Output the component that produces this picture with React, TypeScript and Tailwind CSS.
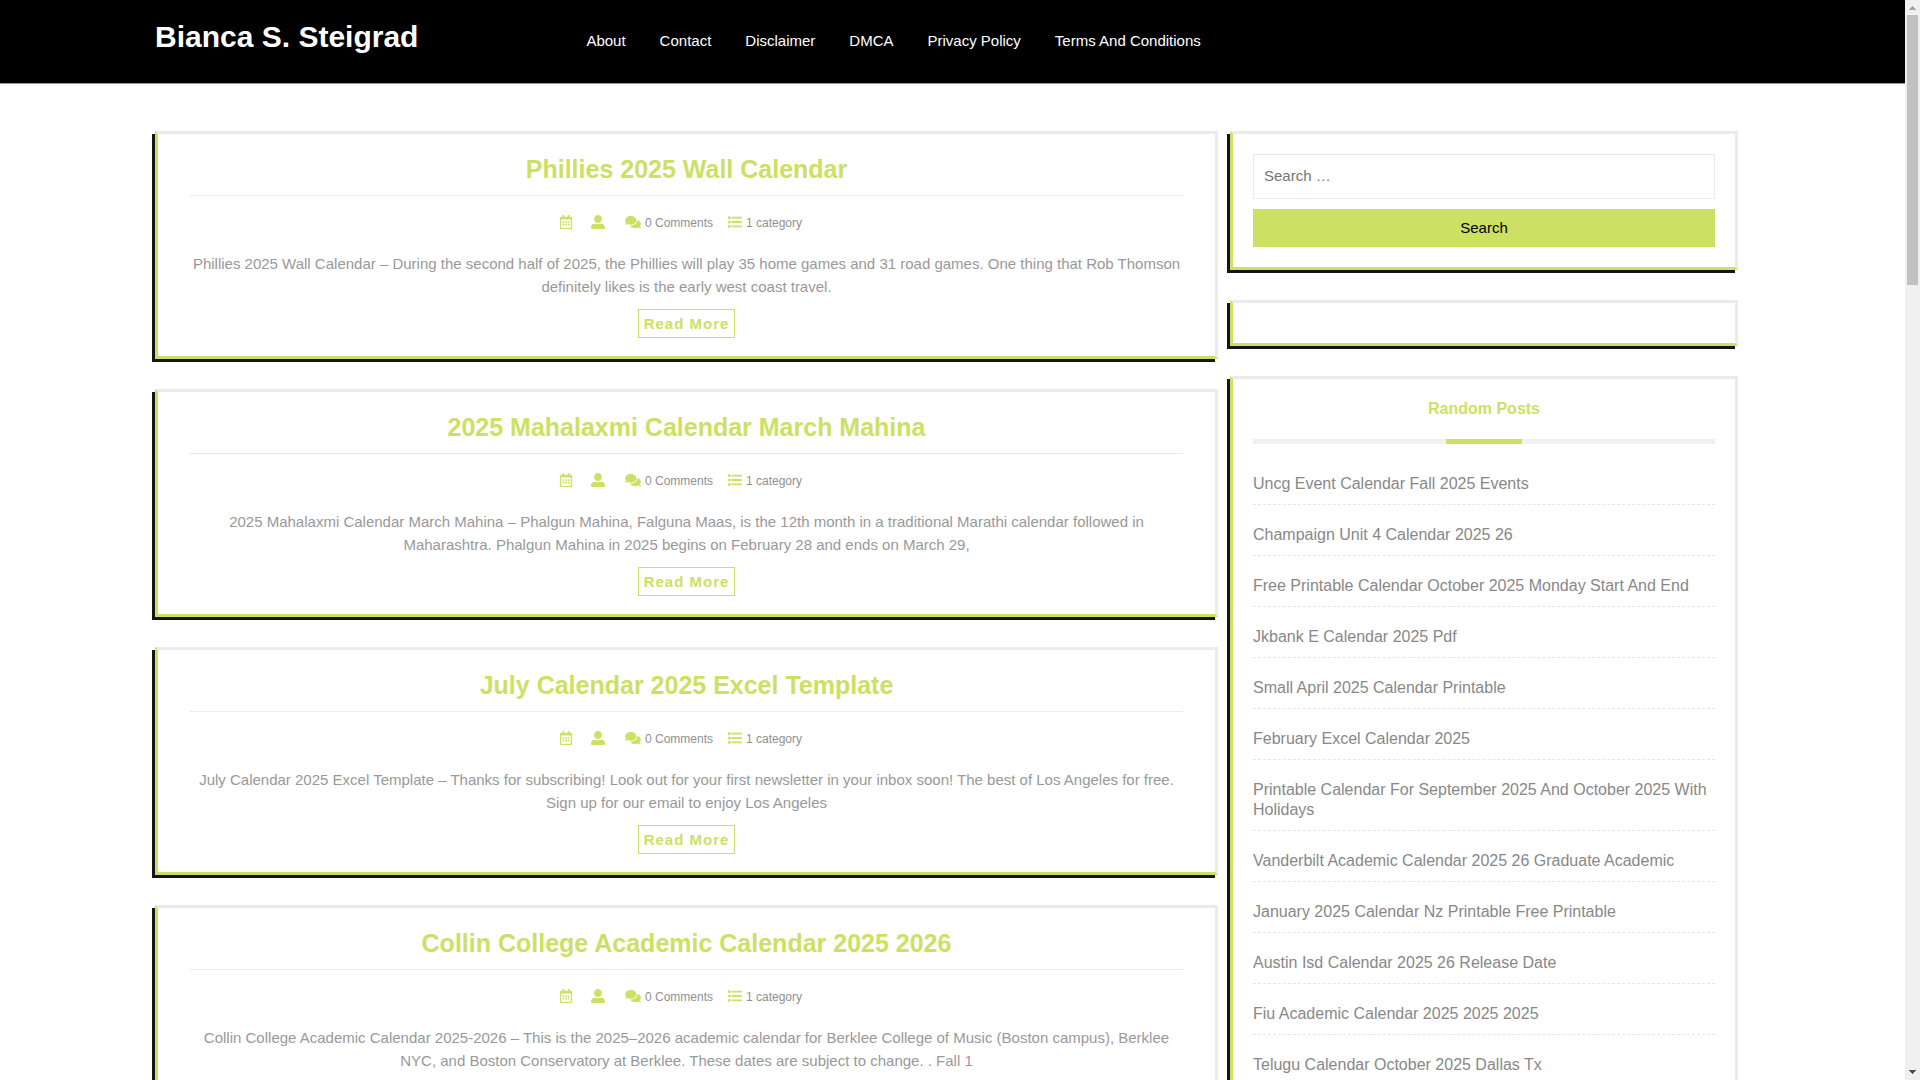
import React from "react";
import { FaRegCalendarAlt, FaUserAlt, FaComments } from "react-icons/fa";

const navItems = ["About", "Contact", "Disclaimer", "DMCA", "Privacy Policy", "Terms And Conditions"];

const posts = [
  {
    title: "Phillies 2025 Wall Calendar",
    text: "Phillies 2025 Wall Calendar – During the second half of 2025, the Phillies will play 35 home games and 31 road games. One thing that Rob Thomson definitely likes is the early west coast travel.",
  },
  {
    title: "2025 Mahalaxmi Calendar March Mahina",
    text: "2025 Mahalaxmi Calendar March Mahina – Phalgun Mahina, Falguna Maas, is the 12th month in a traditional Marathi calendar followed in Maharashtra. Phalgun Mahina in 2025 begins on February 28 and ends on March 29,",
  },
  {
    title: "July Calendar 2025 Excel Template",
    text: "July Calendar 2025 Excel Template – Thanks for subscribing! Look out for your first newsletter in your inbox soon! The best of Los Angeles for free. Sign up for our email to enjoy Los Angeles",
  },
  {
    title: "Collin College Academic Calendar 2025 2026",
    text: "Collin College Academic Calendar 2025-2026 – This is the 2025–2026 academic calendar for Berklee College of Music (Boston campus), Berklee NYC, and Boston Conservatory at Berklee. These dates are subject to change. . Fall 1",
  },
];

const randomPosts = [
  "Uncg Event Calendar Fall 2025 Events",
  "Champaign Unit 4 Calendar 2025 26",
  "Free Printable Calendar October 2025 Monday Start And End",
  "Jkbank E Calendar 2025 Pdf",
  "Small April 2025 Calendar Printable",
  "February Excel Calendar 2025",
  "Printable Calendar For September 2025 And October 2025 With Holidays",
  "Vanderbilt Academic Calendar 2025 26 Graduate Academic",
  "January 2025 Calendar Nz Printable Free Printable",
  "Austin Isd Calendar 2025 26 Release Date",
  "Fiu Academic Calendar 2025 2025 2025",
  "Telugu Calendar October 2025 Dallas Tx",
];

const frame =
  "border-3 border-t-[#ebebeb] border-r-[#ebebeb] border-b-[#cce164] border-l-[#cce164] shadow-[-3px_3px_0_0_#121616]";

function ListIcon() {
  return (
    <svg className="mb-0.5 size-3.5 text-[#cce164]" viewBox="0 0 512 512" fill="currentColor" aria-hidden="true">
      {[48, 208, 368].map((y) => (
        <g key={y}>
          <rect x="0" y={y} width="96" height="96" rx="16" />
          <rect x="128" y={y + 12} width="384" height="72" rx="16" />
        </g>
      ))}
    </svg>
  );
}

function PostCard({ title, text }: { title: string; text: string }) {
  return (
    <article className={`${frame} px-8 pt-4 pb-[18px] text-center`}>
      <h2 className="border-b border-[#ebebeb] pt-[5px] pb-3 text-[25px] leading-7 font-bold text-[#cce164]">
        <a href="#">{title}</a>
      </h2>
      <div className="mt-[17px] flex h-5 items-center justify-center pr-3 text-xs text-[#909090]">
        <FaRegCalendarAlt className="mr-[18px] mb-0.5 size-3.5 text-[#cce164]" />
        <FaUserAlt className="mr-5 mb-0.5 size-3.5 text-[#cce164]" />
        <a href="#" className="mr-[15px] flex items-center gap-1">
          <FaComments className="mb-0.5 h-3.5 w-4 text-[#cce164]" />
          0 Comments
        </a>
        <a href="#" className="flex items-center gap-1">
          <ListIcon />
          1 category
        </a>
      </div>
      <p className="mt-[19px] text-[15px] leading-[23px] text-[#999]">{text}</p>
      <a
        href="#"
        className="mt-[11px] inline-block border border-[#cce164] px-[5px] text-[15px] leading-[27px] font-bold tracking-[1px] text-[#cce164]"
      >
        Read More
      </a>
    </article>
  );
}

function Scrollbar() {
  return (
    <div className="flex w-[15px] shrink-0 flex-col items-center bg-[#f0f0f0]" aria-hidden="true">
      <svg width="15" height="15" viewBox="0 0 15 15" fill="#a3a3a3">
        <path d="M4 10h7v-1h-1v-1h-1v-1h-1v-1h-1v1h-1v1h-1v1h-1z" />
      </svg>
      <div className="h-1/4 w-[11px] bg-[#c1c1c1]" />
      <svg className="mt-auto" width="15" height="15" viewBox="0 0 15 15" fill="#505050">
        <path d="M4 5h7v1h-1v1h-1v1h-1v1h-1v-1h-1v-1h-1v-1h-1z" />
      </svg>
    </div>
  );
}

export default function App() {
  return (
    <div className="flex h-screen overflow-hidden bg-white font-['Liberation_Sans',Arial,sans-serif]">
      <div className="min-w-0 flex-1 overflow-hidden">
        <header className="flex items-start border-b border-[#999] bg-black pr-[167px] pb-[27px] pl-[155px] text-white">
          <h1 className="mr-1 w-[27%] pt-[19px] text-3xl leading-9 font-bold">
            <a href="#">Bianca S. Steigrad</a>
          </h1>
          <nav className="pt-[26px]">
            <ul className="flex gap-[34px] text-[15px] leading-[30px]">
              {navItems.map((item) => (
                <li key={item}>
                  <a href="#">{item}</a>
                </li>
              ))}
            </ul>
          </nav>
        </header>

        <main className="grid grid-cols-[1063fr_508fr] items-start gap-3 pt-[47px] pr-[167px] pl-[155px]">
          <section className="flex flex-col gap-[30px]">
            {posts.map((post) => (
              <PostCard key={post.title} {...post} />
            ))}
          </section>

          <aside className="flex flex-col gap-[30px]">
            <form className={`${frame} flex flex-col gap-2.5 p-5 text-[15px]`} onSubmit={(e) => e.preventDefault()}>
              <input
                type="search"
                aria-label="Search"
                placeholder="Search …"
                className="h-[45px] border border-[#ebebeb] px-2.5 pb-0.5 placeholder:text-[#757575]"
              />
              <button type="submit" className="h-[38px] bg-[#cce164] text-black">
                Search
              </button>
            </form>

            <div className={`${frame} p-5`} />

            <section className={`${frame} p-5`}>
              <h3 className="pb-5 text-center text-base leading-5 font-bold text-[#cce164]">Random Posts</h3>
              <div className="flex h-[5px] justify-center bg-[#f1f1f1]">
                <div className="w-1/6 bg-[#cce164]" />
              </div>
              <ul className="mt-5 text-base leading-5 text-[#888]">
                {randomPosts.map((title) => (
                  <li key={title} className="border-b border-dashed border-[#e6e6e6] pt-5 pb-2.5 first:pt-2.5">
                    <a href="#">{title}</a>
                  </li>
                ))}
              </ul>
            </section>
          </aside>
        </main>
      </div>
      <Scrollbar />
    </div>
  );
}
